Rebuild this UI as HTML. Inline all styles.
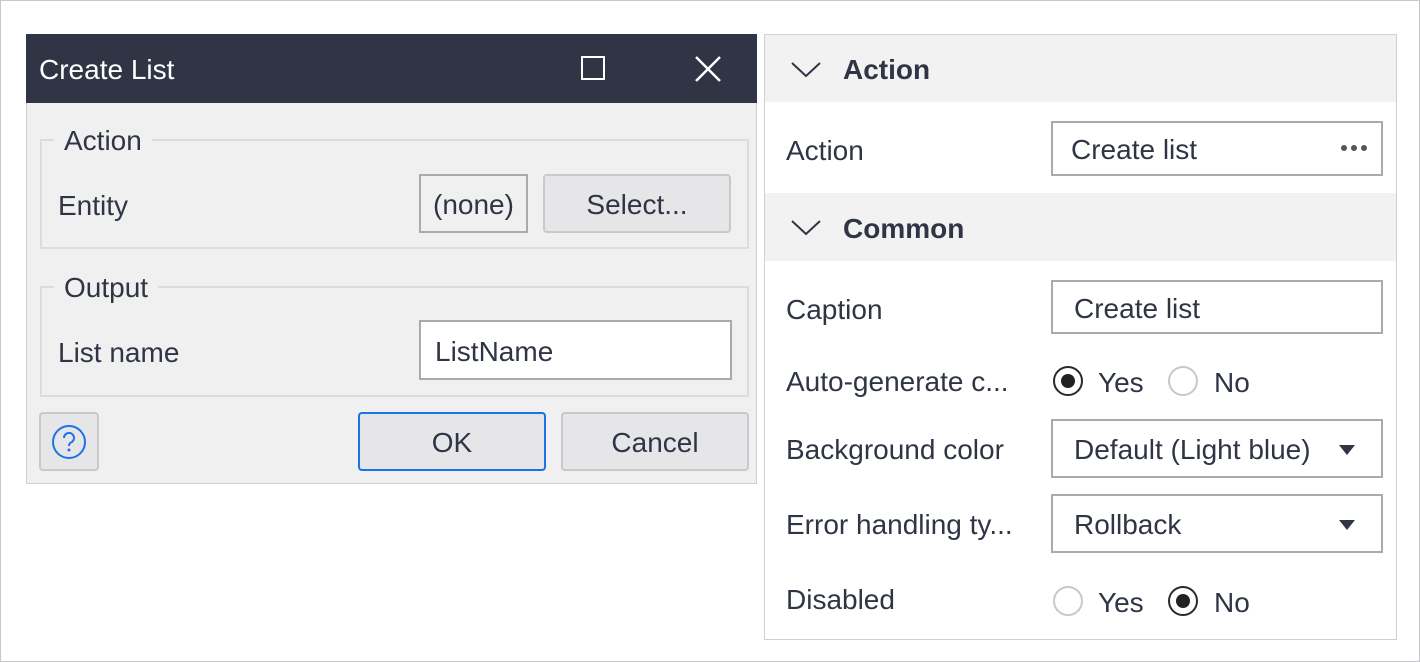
<!DOCTYPE html>
<html><head><meta charset="utf-8"><style>
*{box-sizing:border-box;margin:0;padding:0}
body{width:1420px;height:662px;background:#fff;position:relative;overflow:hidden;font-family:"Liberation Sans",sans-serif;color:#2f3545;font-size:28px}
.a{position:absolute}
.outer{left:0;top:0;width:1420px;height:662px;border:1px solid #c8c8cc}
.dlg{left:26px;top:34px;width:731px;height:450px;background:#f0f0f0;border:1px solid #d0d0d4}
.title{left:26px;top:34px;width:731px;height:69px;background:#2f3545;color:#fff}
.grp{border:2px solid #dcdcdc}
.leg{background:#f0f0f0;padding:0 10px;line-height:30px}
.box{border:2px solid #a9a9ae;background:#fff;display:flex;align-items:center;padding-top:3px}
.btn{border:2px solid #c9c9cd;background:#e6e6e9;border-radius:4px;display:flex;align-items:center;justify-content:center;padding-top:3px}
.hdr{background:#f2f2f2;font-weight:bold}
.lbl{line-height:30px}
.radio{width:30px;height:30px;border-radius:50%;border:2px solid #c8c8cc;background:#fff}
.radio.on{border:2px solid #2a2a2a}
.radio.on::after{content:"";position:absolute;left:6px;top:6px;width:14px;height:14px;border-radius:50%;background:#222}
.tri{width:0;height:0;border-left:8px solid transparent;border-right:8px solid transparent;border-top:10px solid #2f3545}
</style></head><body>
<div class="a outer"></div>
<div class="a dlg"></div>
<div class="a title"><div class="a" style="left:13px;top:20px;line-height:32px">Create List</div>
<div class="a" style="left:555px;top:22px;width:24px;height:24px;border:2px solid #fff"></div>
<svg class="a" style="left:668px;top:21px" width="28" height="28"><path d="M2 2L26 26M26 2L2 26" stroke="#fff" stroke-width="2.5"/></svg></div>
<div class="a grp" style="left:40px;top:139px;width:709px;height:110px"></div>
<div class="a leg" style="left:54px;top:126px">Action</div>
<div class="a lbl" style="left:58px;top:191px">Entity</div>
<div class="a box" style="left:419px;top:174px;width:109px;height:59px;background:#f0f0f0;padding-left:12px">(none)</div>
<div class="a btn" style="left:543px;top:174px;width:188px;height:59px">Select...</div>
<div class="a grp" style="left:40px;top:286px;width:709px;height:111px"></div>
<div class="a leg" style="left:54px;top:273px">Output</div>
<div class="a lbl" style="left:58px;top:338px">List name</div>
<div class="a box" style="left:419px;top:320px;width:313px;height:60px;padding-left:14px">ListName</div>
<div class="a btn" style="left:39px;top:412px;width:60px;height:59px;padding-top:0"><svg width="36" height="36"><circle cx="18" cy="18" r="16" fill="none" stroke="#1a73e8" stroke-width="2"/><path d="M13 14a5 5 0 1 1 7 4.5c-1.5.8-2 1.5-2 3.5" fill="none" stroke="#1a73e8" stroke-width="2"/><circle cx="18" cy="26" r="1.5" fill="#1a73e8"/></svg></div>
<div class="a btn" style="left:358px;top:412px;width:188px;height:59px;border-color:#1a73e8">OK</div>
<div class="a btn" style="left:561px;top:412px;width:188px;height:59px">Cancel</div>

<div class="a" style="left:764px;top:34px;width:633px;height:606px;border:1px solid #d0d0d4"></div>
<div class="a hdr" style="left:765px;top:35px;width:631px;height:67px"><svg class="a" style="left:26px;top:27px" width="30" height="16"><path d="M1 1L15 14L29 1" fill="none" stroke="#2f3545" stroke-width="2"/></svg><div class="a" style="left:78px;top:19px">Action</div></div>
<div class="a lbl" style="left:786px;top:136px">Action</div>
<div class="a box" style="left:1051px;top:121px;width:332px;height:55px;padding-left:18px">Create list<div class="a" style="right:14px;top:22px;display:flex;gap:4px"><i style="width:6px;height:6px;border-radius:50%;background:#555"></i><i style="width:6px;height:6px;border-radius:50%;background:#555"></i><i style="width:6px;height:6px;border-radius:50%;background:#555"></i></div></div>
<div class="a hdr" style="left:765px;top:193px;width:631px;height:68px"><svg class="a" style="left:26px;top:27px" width="30" height="16"><path d="M1 1L15 14L29 1" fill="none" stroke="#2f3545" stroke-width="2"/></svg><div class="a" style="left:78px;top:20px">Common</div></div>
<div class="a lbl" style="left:786px;top:295px">Caption</div>
<div class="a box" style="left:1051px;top:280px;width:332px;height:54px;padding-left:21px">Create list</div>
<div class="a lbl" style="left:786px;top:367px">Auto-generate c...</div>
<div class="a radio on" style="left:1053px;top:366px"></div><div class="a lbl" style="left:1098px;top:368px">Yes</div>
<div class="a radio" style="left:1168px;top:366px"></div><div class="a lbl" style="left:1214px;top:368px">No</div>
<div class="a lbl" style="left:786px;top:435px">Background color</div>
<div class="a box" style="left:1051px;top:419px;width:332px;height:59px;padding-left:21px">Default (Light blue)<div class="a tri" style="right:26px;top:24px"></div></div>
<div class="a lbl" style="left:786px;top:510px">Error handling ty...</div>
<div class="a box" style="left:1051px;top:494px;width:332px;height:59px;padding-left:21px">Rollback<div class="a tri" style="right:26px;top:24px"></div></div>
<div class="a lbl" style="left:786px;top:585px">Disabled</div>
<div class="a radio" style="left:1053px;top:586px"></div><div class="a lbl" style="left:1098px;top:588px">Yes</div>
<div class="a radio on" style="left:1168px;top:586px"></div><div class="a lbl" style="left:1214px;top:588px">No</div>
</body></html>
